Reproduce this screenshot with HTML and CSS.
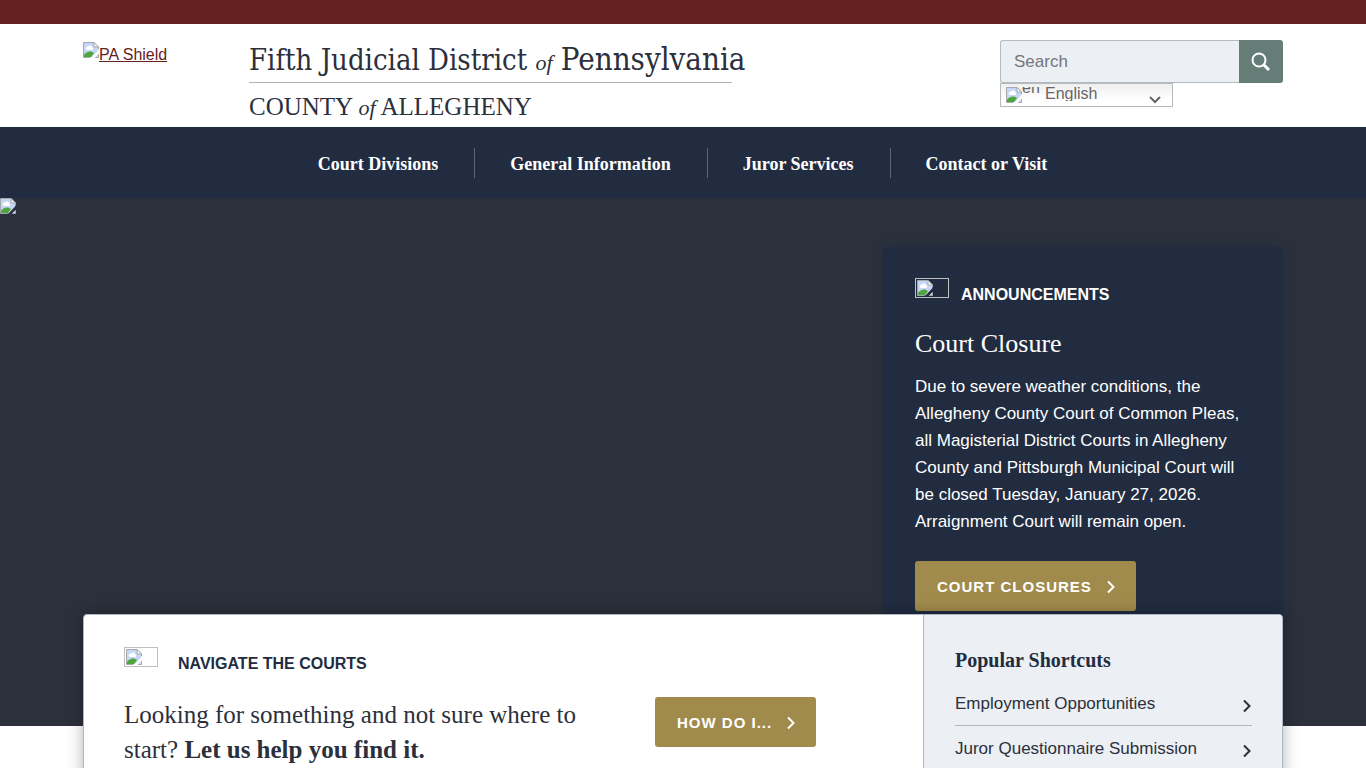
FILE: index.html
```html
<!DOCTYPE html>
<html lang="en">
<head>
    <meta charset="UTF-8">
    <meta name="viewport" content="width=device-width, initial-scale=1.0">
    <title>Fifth Judicial District of Pennsylvania</title>
    <link rel="stylesheet" href="styles.css">
</head>
<body>
    <!-- shared icons -->
    <svg class="sprite" aria-hidden="true">
        <symbol id="image-icon" viewBox="0 0 16 16">
            <path d="M0.5 0.5H11L15.5 5V15.5H0.5Z" fill="#c6d7f5"/>
            <path d="M3 7.5a2 2 0 0 1 2-3a2.500 2.500 0 0 1 4.500 1a1.500 1.500 0 0 1 0 2.500H4Z" fill="#fff"/>
            <path d="M1 15V13C3 9.500 8 8 11 11L8 15Z" fill="#4da53c"/>
            <path d="M0.500 15.500V0.500H11L15.500 5V7" fill="none" stroke="#a5a8ad"/>
            <path d="M11 0.500V5H15.500Z" fill="#fff" stroke="#a5a8ad"/>
            <path d="M0.500 15.500H7M12 15.500H15.500V10" fill="none" stroke="#a5a8ad"/>
            <path d="M16 7.500L8 16H11.500L16 11.500Z" class="tear"/>
        </symbol>
        <symbol id="chevron" viewBox="0 0 10 14">
            <path d="M2 1.500L7.500 7L2 12.500" fill="none" stroke="currentColor" stroke-width="2"/>
        </symbol>
    </svg>

    <div class="topbar"></div>

    <header class="header container">
        <a class="shield" href="#"><svg class="image-icon"><use href="#image-icon"/></svg>PA Shield</a>
        <a class="logo" href="#">
            <span class="logo-title">Fifth Judicial District <i>of</i> <span class="logo-state">Pennsylvania</span></span>
            <span class="logo-county">COUNTY <i>of</i> ALLEGHENY</span>
        </a>
        <div class="tools">
            <form class="search">
                <input type="search" placeholder="Search" aria-label="Search">
                <button type="submit" aria-label="Submit search">
                    <svg viewBox="0 0 20 20" width="20" height="20"><circle cx="8" cy="8" r="6.500"/><path d="M12.500 12.500L18 18" stroke-width="3"/></svg>
                </button>
            </form>
            <div class="language">
                <svg class="image-icon"><use href="#image-icon"/></svg>
                <span class="flag-alt">en</span>
                <select aria-label="Language">
                    <option>English</option>
                </select>
                <svg class="arrow" viewBox="0 0 12 8"><path d="M1 1L6 6L11 1"/></svg>
            </div>
        </div>
    </header>

    <nav class="nav">
        <a href="#">Court Divisions</a>
        <a href="#">General Information</a>
        <a href="#">Juror Services</a>
        <a href="#">Contact or Visit</a>
    </nav>

    <section class="hero">
        <svg class="image-icon hero-image"><use href="#image-icon"/></svg>
        <div class="container">
            <div class="announcement">
                <div class="label">
                    <span class="label-icon"><svg class="image-icon"><use href="#image-icon"/></svg></span>
                    <h2>Announcements</h2>
                </div>
                <h3>Court Closure</h3>
                <p>Due to severe weather conditions, the Allegheny County Court of Common Pleas, all Magisterial District Courts in Allegheny County and Pittsburgh Municipal Court will be closed Tuesday, January 27, 2026. Arraignment Court will remain open.</p>
                <a class="btn" href="#">Court Closures <svg class="chevron"><use href="#chevron"/></svg></a>
            </div>
        </div>
    </section>

    <main class="container">
        <div class="card">
            <section class="navigate">
                <div class="label">
                    <span class="label-icon"><svg class="image-icon"><use href="#image-icon"/></svg></span>
                    <h2>Navigate the Courts</h2>
                </div>
                <div class="navigate-row">
                    <p>Looking for something and not sure where to start? <strong>Let us help you find it.</strong></p>
                    <button class="btn" type="button">How do I... <svg class="chevron"><use href="#chevron"/></svg></button>
                </div>
            </section>
            <aside class="shortcuts">
                <h2>Popular Shortcuts</h2>
                <ul>
                    <li><a href="#">Employment Opportunities <svg class="chevron"><use href="#chevron"/></svg></a></li>
                    <li><a href="#">Juror Questionnaire Submission <svg class="chevron"><use href="#chevron"/></svg></a></li>
                </ul>
            </aside>
        </div>
    </main>
</body>
</html>
```
FILE: styles.css
```css
* {
    box-sizing: border-box;
    margin: 0;
    padding: 0;
}
body {
    font-family: "Liberation Sans", Arial, sans-serif;
    font-size: 17px;
    line-height: 27px;
    color: #2b303c;
    background: #fff;
}
.container {
    width: calc(100% - 32px);
    max-width: 1200px;
    margin: 0 auto;
}
.sprite {
    display: none;
}
.image-icon {
    display: block;
    flex: none;
    width: 16px;
    height: 16px;
    --tear: #fff;
}
.tear {
    fill: var(--tear);
}
.chevron {
    flex: none;
    width: 10px;
    height: 14px;
}
.topbar {
    height: 24px;
    background: #64211f;
}

/* header */
.header {
    display: flex;
    height: 103px;
    padding-top: 16px;
}
.shield {
    display: flex;
    width: 166px;
    padding-top: 2px;
    font-size: 16px;
    line-height: 25px;
    color: #64211f;
}
.logo {
    color: #2b303c;
    text-decoration: none;
    white-space: nowrap;
}
.logo-title,
.logo-county {
    display: block;
    font-family: "DejaVu Serif Condensed", "DejaVu Serif", serif;
    font-size: 29px;
    line-height: 38px;
}
.logo-title {
    width: 483px;
    height: 43px;
    border-bottom: 1px solid #b0b4b8;
}
.logo-state {
    font-size: 31px;
}
.logo-county {
    padding-top: 5px;
    font-family: "Liberation Serif", serif;
    font-size: 25px;
}
.logo i {
    font-family: "Liberation Serif", serif;
    font-size: 22px;
}
.tools {
    width: 283px;
    margin-left: auto;
}
.search {
    display: flex;
    height: 43px;
}
.search input {
    flex: 1;
    min-width: 0;
    padding: 0 13px;
    border: 1px solid #b5babd;
    border-right: 0;
    border-radius: 3px 0 0 3px;
    background: #eceff3;
    font: inherit;
    outline: none;
    appearance: none;
}
.search input::placeholder {
    color: #73767c;
}
.search button {
    display: flex;
    align-items: center;
    justify-content: center;
    width: 44px;
    border: 0;
    border-radius: 0 3px 3px 0;
    background: #667c76;
}
.search svg {
    fill: none;
    stroke: #fff;
    stroke-width: 2;
}
.language {
    display: flex;
    position: relative;
    width: 173px;
    height: 24px;
    padding: 3px 5px;
    border: 1px solid #b5babd;
    background: linear-gradient(#efefef, #fff 70%);
    color: #666;
    overflow: hidden;
}
.flag-alt {
    width: 23px;
    height: 16px;
    overflow: hidden;
    font-size: 16px;
    line-height: 1px;
}
.language select {
    flex: 1;
    height: 14px;
    border: 0;
    background: none;
    color: #666;
    font: inherit;
    font-size: 16px;
    line-height: 14px;
    appearance: none;
}
.arrow {
    position: absolute;
    right: 11px;
    bottom: 2px;
    width: 12px;
    height: 8px;
    fill: none;
    stroke: #666;
    stroke-width: 2;
}

/* main menu */
.nav {
    display: flex;
    justify-content: center;
    align-items: center;
    height: 71px;
    background: #212c41;
}
.nav a {
    padding: 2px 36px 0 35px;
    border-right: 1px solid #5c6575;
    font: bold 18px/28px "Liberation Serif", "Times New Roman", serif;
    color: #fff;
    text-decoration: none;
}
.nav a:last-child {
    border-right: 0;
}

/* hero */
.hero {
    position: relative;
    height: 528px;
    padding-top: 49px;
    background: #2b303c;
}
.hero-image {
    position: absolute;
    top: 0;
    left: 0;
    --tear: #2b303c;
}
.announcement {
    width: 400px;
    height: 420px;
    margin-left: auto;
    padding: 31px 32px;
    border-radius: 3px;
    background: #212c41;
    box-shadow: 0 0 10px rgba(33, 44, 65, 0.4);
    color: #fff;
}
.announcement .image-icon {
    --tear: #212c41;
}
.label {
    display: flex;
    gap: 12px;
}
.label-icon {
    width: 34px;
    height: 20px;
    padding: 1px;
    border: 1px solid #c0c0c0;
}
.label h2 {
    padding-top: 5px;
    font-size: 16px;
    line-height: 24px;
    text-transform: uppercase;
}
.announcement h3 {
    margin: 19px 0 11px;
    font: 26px/36px "Liberation Serif", "Times New Roman", serif;
}
.btn {
    display: inline-flex;
    align-items: center;
    gap: 14px;
    height: 50px;
    padding: 1px 20px 0 22px;
    border: 0;
    border-radius: 3px;
    background: #a18b4c;
    color: #fff;
    font: bold 15px/24px "Liberation Sans", Arial, sans-serif;
    letter-spacing: 1px;
    text-decoration: none;
    text-transform: uppercase;
    white-space: nowrap;
}
.announcement .btn {
    margin-top: 26px;
}

/* overlapping card */
.card {
    display: flex;
    position: relative;
    margin-top: -112px;
    border: 1px solid #b0b7c4;
    border-radius: 4px;
    background: #fff;
    box-shadow: 0 0 16px rgba(0, 0, 0, 0.3);
    overflow: hidden;
}
.navigate {
    flex: 1;
    padding: 32px 40px;
    color: #212c41;
}
.navigate .label {
    gap: 20px;
}
.navigate-row {
    display: flex;
    align-items: flex-start;
    gap: 51px;
    margin-top: 21px;
    color: #2b303c;
}
.navigate-row p {
    flex: 0 1 480px;
    font: 25px/35px "Liberation Serif", "Times New Roman", serif;
}
.shortcuts {
    width: 359px;
    padding: 32px 30px 32px 31px;
    border-left: 1px solid #b0b7c4;
    background: #eceff3;
}
.shortcuts h2 {
    margin-bottom: 8px;
    font: bold 20px/26px "Liberation Serif", "Times New Roman", serif;
    color: #212c41;
}
.shortcuts ul {
    list-style: none;
}
.shortcuts a {
    display: flex;
    justify-content: space-between;
    height: 44px;
    padding-top: 9px;
    color: #2b303c;
    text-decoration: none;
}
.shortcuts li {
    border-bottom: 1px solid #b0b7c4;
}
.shortcuts .chevron {
    margin-top: 9px;
}
.shortcuts li:last-child {
    border-bottom: 0;
}
```
